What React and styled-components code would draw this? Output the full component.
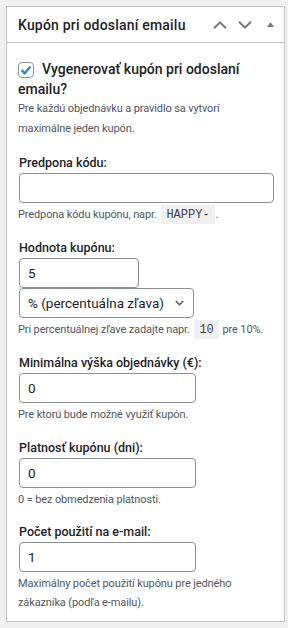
import styled, { createGlobalStyle } from "styled-components";

const GlobalStyle = createGlobalStyle`
  html, body {
    margin: 0;
    padding: 0;
    background: #f0f0f1;
  }
  body {
    font-family: Roboto, "Noto Sans", sans-serif;
    color: #1d2327;
  }
`;

const Page = styled.div`
  padding: 6px 3px 5px 6px;
`;

const Box = styled.div`
  background: #fff;
  border: 1px solid #c3c4c7;
`;

const Header = styled.div`
  display: flex;
  align-items: center;
  height: 35px;
  padding: 0 10px 0 11px;
  border-bottom: 1px solid #c3c4c7;
`;

const Title = styled.h2`
  flex: 1;
  margin: 0;
  font-size: 14px;
  font-weight: 500;
  letter-spacing: 0.2px;
`;

const HeaderActions = styled.div`
  display: flex;
  align-items: center;
  color: #787c82;
`;

const IconButton = styled.span`
  display: flex;
  align-items: center;
  justify-content: center;
  width: ${(p) => p.$w || 14}px;
  height: 16px;
  margin-left: ${(p) => p.$gap || 0}px;
`;

const Body = styled.div`
  padding: 16px 12px 9px 11px;
`;

const Field = styled.div`
  display: flex;
  flex-direction: column;
  align-items: flex-start;
  margin-bottom: ${(p) => p.$gap ?? 13}px;
`;

const CheckRow = styled.label`
  display: block;
  font-size: 14px;
  font-weight: 500;
  line-height: 20px;
`;

const Check = styled.span`
  display: inline-flex;
  align-items: center;
  justify-content: center;
  box-sizing: border-box;
  width: 16px;
  height: 16px;
  border: 1px solid #8c8f94;
  border-radius: 4px;
  vertical-align: -3px;
  margin-right: 8px;
  color: #3582c4;
`;

const Label = styled.label`
  font-size: 12.5px;
  font-weight: 500;
  line-height: 20px;
  padding-left: 1px;
`;

const Input = styled.div`
  box-sizing: border-box;
  width: ${(p) => p.$w}px;
  height: 30px;
  flex-shrink: 0;
  margin-left: 1px;
  border: 1px solid #8c8f94;
  border-radius: 4px;
  padding: 0 8px;
  display: flex;
  align-items: center;
  font-size: 13.5px;
  background: #fff;
`;

const Select = styled(Input)`
  justify-content: space-between;
  padding: 0 9px 0 8px;
`;

const Desc = styled.p`
  margin: ${(p) => p.$mt ?? 2}px 0 0;
  font-size: 11px;
  line-height: ${(p) => p.$lh || 20}px;
  letter-spacing: -0.12px;
  color: #50575e;
`;

const Code = styled.code`
  font-family: "Liberation Mono", "DejaVu Sans Mono", monospace;
  font-size: 12px;
  letter-spacing: 0;
  color: #3c434a;
  background: #f0f0f1;
  padding: 3px 5px 2px;
  margin: 0 1px 0 2px;
`;

const ChevronUp = () => (
  <svg width="14" height="8" viewBox="0 0 14 8" fill="none" stroke="currentColor" strokeWidth="2">
    <path d="M1 7.3 L7 1.5 L13 7.3" />
  </svg>
);

const ChevronDown = () => (
  <svg width="14" height="8" viewBox="0 0 14 8" fill="none" stroke="currentColor" strokeWidth="2">
    <path d="M1 0.7 L7 6.5 L13 0.7" />
  </svg>
);

const Triangle = () => (
  <svg width="7" height="5" viewBox="0 0 7 5">
    <path d="M0 5 L3.5 0 L7 5 Z" fill="currentColor" />
  </svg>
);

const SmallChevron = () => (
  <svg width="9" height="6" viewBox="0 0 9 6" fill="none" stroke="#50575e" strokeWidth="1.5">
    <path d="M0.8 1 L4.5 4.7 L8.2 1" />
  </svg>
);

const CheckMark = () => (
  <svg width="14" height="14" viewBox="0 0 14 14" fill="none" stroke="currentColor" strokeWidth="2.4">
    <path d="M2.5 7.2 L5.6 10.2 L11.5 3.5" />
  </svg>
);

export default function App() {
  return (
    <>
      <GlobalStyle />
      <Page>
        <Box>
          <Header>
            <Title>Kupón pri odoslaní emailu</Title>
            <HeaderActions>
              <IconButton>
                <ChevronUp />
              </IconButton>
              <IconButton $gap={11}>
                <ChevronDown />
              </IconButton>
              <IconButton $w={7} $gap={15}>
                <Triangle />
              </IconButton>
            </HeaderActions>
          </Header>
          <Body>
            <Field $gap={14}>
              <CheckRow>
                <Check>
                  <CheckMark />
                </Check>
                Vygenerovať kupón pri odoslaní emailu?
              </CheckRow>
              <Desc $mt={0}>Pre každú objednávku a pravidlo sa vytvorí maximálne jeden kupón.</Desc>
            </Field>

            <Field>
              <Label>Predpona kódu:</Label>
              <Input $w={255} />
              <Desc>
                Predpona kódu kupónu, napr. <Code>HAPPY-</Code>.
              </Desc>
            </Field>

            <Field>
              <Label>Hodnota kupónu:</Label>
              <Input $w={120}>5</Input>
              <Select $w={175}>
                % (percentuálna zľava)
                <SmallChevron />
              </Select>
              <Desc>
                Pri percentuálnej zľave zadajte napr. <Code>10</Code> pre 10%.
              </Desc>
            </Field>

            <Field>
              <Label>Minimálna výška objednávky (€):</Label>
              <Input $w={177}>0</Input>
              <Desc>Pre ktorú bude možné využiť kupón.</Desc>
            </Field>

            <Field $gap={12}>
              <Label>Platnosť kupónu (dni):</Label>
              <Input $w={177}>0</Input>
              <Desc>0 = bez obmedzenia platnosti.</Desc>
            </Field>

            <Field $gap={0}>
              <Label>Počet použití na e-mail:</Label>
              <Input $w={177}>1</Input>
              <Desc $lh={19}>Maximálny počet použití kupónu pre jedného zákazníka (podľa e-mailu).</Desc>
            </Field>
          </Body>
        </Box>
      </Page>
    </>
  );
}
